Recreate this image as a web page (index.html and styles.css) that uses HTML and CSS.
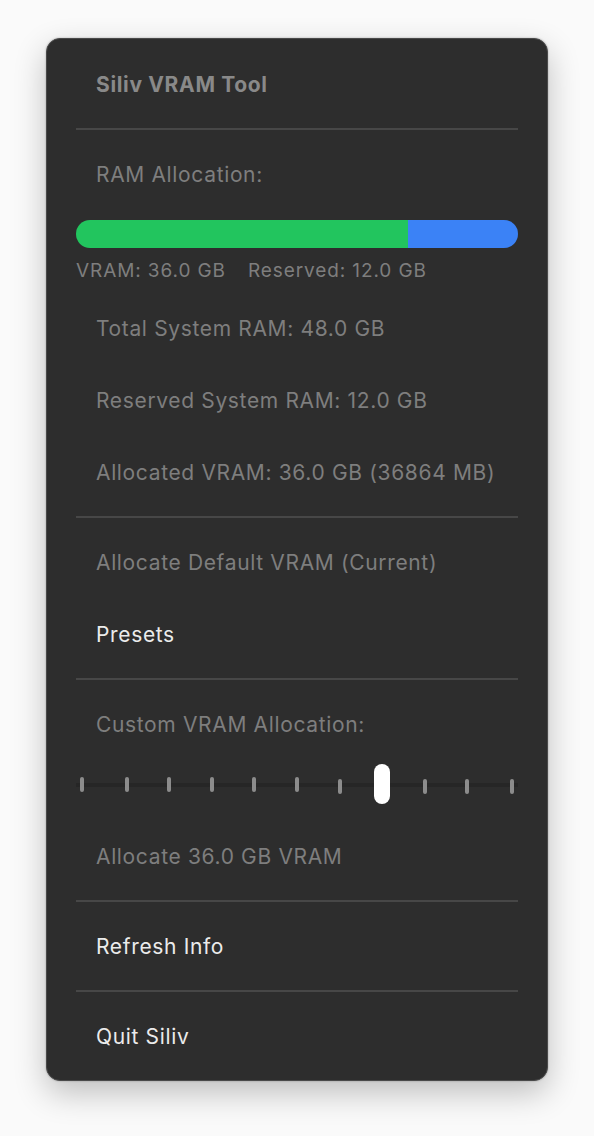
FILE: index.html
```html
<!DOCTYPE html>
<html lang="en">
<head>
  <meta charset="UTF-8">
  <title>Siliv VRAM Tool</title>
  <link rel="stylesheet" href="styles.css">
</head>
<body>
  <div class="menu-panel">
    <div class="menu-item menu-title">Siliv VRAM Tool</div>
    <div class="menu-sep"></div>

    <div class="menu-item">RAM Allocation:</div>
    <div class="ram-bar">
      <div class="ram-bar-vram" style="width: 75%"></div>
      <div class="ram-bar-reserved"></div>
    </div>
    <div class="ram-legend">
      <span>VRAM: 36.0 GB</span>
      <span>Reserved: 12.0 GB</span>
    </div>
    <div class="menu-item">Total System RAM: 48.0 GB</div>
    <div class="menu-item">Reserved System RAM: 12.0 GB</div>
    <div class="menu-item">Allocated VRAM: 36.0 GB (36864 MB)</div>
    <div class="menu-sep"></div>

    <div class="menu-item">Allocate Default VRAM (Current)</div>
    <div class="menu-item active">Presets</div>
    <div class="menu-sep"></div>

    <div class="menu-item">Custom VRAM Allocation:</div>
    <div class="slider">
      <div class="slider-track"></div>
      <div class="slider-stops">
        <span class="stop first"><span class="tick"></span></span>
        <span class="stop"><span class="tick"></span></span>
        <span class="stop"><span class="tick"></span></span>
        <span class="stop"><span class="tick"></span></span>
        <span class="stop"><span class="tick"></span></span>
        <span class="stop"><span class="tick"></span></span>
        <span class="stop"><span class="tick low"></span></span>
        <span class="stop"><span class="slider-thumb"></span></span>
        <span class="stop"><span class="tick low"></span></span>
        <span class="stop"><span class="tick low"></span></span>
        <span class="stop last"><span class="tick low"></span></span>
      </div>
    </div>
    <div class="menu-item">Allocate 36.0 GB VRAM</div>
    <div class="menu-sep"></div>

    <div class="menu-item active">Refresh Info</div>
    <div class="menu-sep"></div>

    <div class="menu-item active">Quit Siliv</div>
  </div>
</body>
</html>
```

FILE: styles.css
```css
body {
  font-family: Inter, 'Noto Sans', 'Liberation Sans', sans-serif;
  background: #fafafa;
  margin: 0;
  padding: 38px 0 0 46px;
  min-height: 100vh;
  box-sizing: border-box;
}
.menu-panel {
  width: 502px;
  box-sizing: border-box;
  background: #2d2d2d;
  border: 1px solid #4a4a4a;
  border-radius: 14px;
  box-shadow: 0 12px 32px rgba(0,0,0,0.24), 0 0 2px rgba(0,0,0,0.3);
  padding: 9px 29px 8px 29px;
}
.menu-item {
  height: 72px;
  display: flex;
  align-items: center;
  padding-left: 20px;
  font-size: 21px;
  color: #7e7e7e;
  letter-spacing: 0.65px;
}
.menu-item.active { color: #ebebeb; }
.menu-title {
  font-weight: 700;
  color: #898989;
}
.menu-sep {
  height: 2px;
  margin: 8px 0;
  background: #474747;
}
.ram-bar {
  display: flex;
  height: 28px;
  margin-top: 10px;
  border-radius: 14px;
  overflow: hidden;
}
.ram-bar-vram { background: #22c55e; }
.ram-bar-reserved { flex: 1; background: #3b82f6; }
.ram-legend {
  display: flex;
  gap: 22px;
  margin: 12px 0 10px 0;
  height: 22px;
  line-height: 22px;
  font-size: 19px;
  letter-spacing: 0.9px;
  color: #7e7e7e;
}
.slider {
  position: relative;
  height: 60px;
}
.slider-track {
  position: absolute;
  left: 0;
  right: 0;
  top: 23px;
  height: 4px;
  background: #262626;
}
.slider-stops {
  height: 50px;
  display: flex;
  justify-content: space-between;
  padding: 0 8px;
  position: relative;
}
.stop {
  width: 0;
  display: flex;
  justify-content: center;
  align-items: center;
}
.tick {
  flex: none;
  width: 4px;
  height: 15px;
  border-radius: 2px;
  background: #8c8c8c;
  margin-top: -1px;
}
.tick.low { margin-top: 3px; }
.stop.first .tick { margin-left: -4px; }
.stop.last .tick { margin-right: -4px; }
.slider-thumb {
  flex: none;
  width: 16px;
  height: 40px;
  border-radius: 8px;
  background: #ffffff;
  margin-top: -2px;
}
```
